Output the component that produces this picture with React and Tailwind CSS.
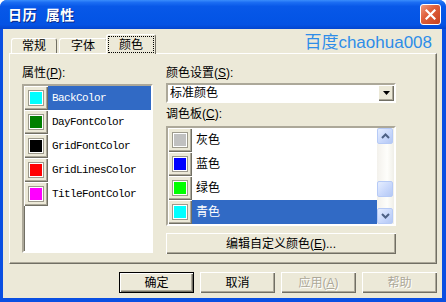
import React from "react";

const raised =
  "bg-[#ECE9D8] shadow-[inset_1px_1px_0_#ffffff,inset_-1px_-1px_0_#716F64,inset_-2px_-2px_0_#ACA899]";
const sunken =
  "border-t-2 border-l-2 border-b-2 border-r-2 border-t-[#ACA899] border-l-[#ACA899] border-b-white border-r-white";
const cjk = "font-['Liberation_Sans','Noto_Sans_CJK_SC',sans-serif]";

function ColorButton({ fill }) {
  return (
    <div className={`w-[24px] h-[24px] shrink-0 flex items-center justify-center ${raised}`}>
      <div className="w-[16px] h-[16px] border border-[#9D9A8C] bg-white p-[1px] -mt-px -ml-px">
        <div className={`w-full h-full ${fill}`} />
      </div>
    </div>
  );
}

function PropRow({ fill, name, selected }) {
  return (
    <div className="flex h-[24px] items-stretch">
      <ColorButton fill={fill} />
      <div
        className={`flex-1 flex items-center pl-[4px] font-['Liberation_Mono',monospace] text-[11px] tracking-[-0.6px] ${
          selected ? "bg-[#316AC5] text-white" : "text-black"
        }`}
      >
        {name}
      </div>
    </div>
  );
}

function PaletteRow({ fill, name, selected }) {
  return (
    <div className="flex h-[24px] items-stretch shrink-0">
      <ColorButton fill={fill} />
      <div
        className={`flex-1 flex items-center pl-[4px] text-[12px] leading-[14px] ${
          selected ? "bg-[#316AC5] text-white" : "text-black"
        }`}
      >
        {name}
      </div>
    </div>
  );
}

function ScrollBtn({ dir }) {
  return (
    <div className="w-[16px] h-[16px] rounded-[2px] border border-[#B6CAF6] bg-[linear-gradient(135deg,#E6EEFF_0%,#C6D6FB_60%,#B4C8F4_100%)] flex items-center justify-center">
      {dir && (
        <svg width="9" height="6" viewBox="0 0 9 6">
          {dir === "up" ? (
            <path d="M1 5 L4.5 1.5 L8 5" stroke="#4D6185" strokeWidth="2" fill="none" />
          ) : (
            <path d="M1 1 L4.5 4.5 L8 1" stroke="#4D6185" strokeWidth="2" fill="none" />
          )}
        </svg>
      )}
    </div>
  );
}

function DlgButton({ children, isDefault, disabled }) {
  return (
    <div
      className={`w-[75px] h-[21px] flex items-center justify-center text-[12px] leading-[14px] ${raised} ${
        isDefault ? "border border-black" : ""
      } ${disabled ? "text-[#ACA899] [text-shadow:1px_1px_0_#ffffff]" : "text-black"}`}
    >
      {children}
    </div>
  );
}

export default function App() {
  return (
    <div className={`w-[446px] h-[302px] flex flex-col bg-[#0A4FE2] rounded-t-[7px] overflow-hidden ${cjk}`}>
      {/* Title bar */}
      <div className="h-[29px] shrink-0 flex items-center justify-between pl-[8px] pr-[5px] bg-[linear-gradient(180deg,#3A8DFB_0%,#1C6EF3_8%,#0858E8_22%,#0455E6_60%,#0553E4_85%,#0445CF_100%)]">
        <span className="text-white font-bold text-[14px] leading-[16px] [text-shadow:1px_1px_0_#0A2A8A] tracking-[0.5px]">
          日历&nbsp;&nbsp;属性
        </span>
        <div className="w-[21px] h-[21px] rounded-[3px] border border-white bg-[linear-gradient(135deg,#F09A7E_0%,#E0603C_40%,#C8401E_100%)] flex items-center justify-center">
          <svg width="11" height="11" viewBox="0 0 11 11">
            <path d="M1.5 1.5 L9.5 9.5 M9.5 1.5 L1.5 9.5" stroke="#fff" strokeWidth="2.2" strokeLinecap="square" />
          </svg>
        </div>
      </div>

      {/* Body */}
      <div className="flex-1 ml-[3px] mr-[4px] mb-[4px] bg-[#ECE9D8] flex flex-col pl-[6px] pr-[5px] pt-[6px]">
        {/* Tabs */}
        <div className="h-[18px] flex items-end pl-[2px] relative z-10">
          <div className="w-[46px] h-[15px] border-t border-l border-white border-r border-r-[#716F64] rounded-t-[3px] flex items-center justify-center text-[12px] leading-[14px] text-black">
            常规
          </div>
          <div className="ml-[2px] w-[48px] h-[15px] border-t border-l border-white border-r border-r-[#716F64] rounded-t-[3px] flex items-center justify-center text-[12px] leading-[14px] text-black">
            字体
          </div>
          <div className="-ml-[1px] w-[50px] h-[20px] -mb-[1px] bg-[#ECE9D8] border-t border-l border-white border-r border-r-[#716F64] rounded-t-[3px] flex items-stretch p-[1px]">
            <div className="flex-1 border border-dotted border-black flex items-center justify-center text-[12px] leading-[14px] text-black">
              颜色
            </div>
          </div>
          <div className="ml-auto mr-[5px] self-start -mt-[2px] text-[17px] leading-[20px] text-[#2E8DE8]">
            百度chaohua008
          </div>
        </div>

        {/* Panel */}
        <div className="h-[211px] shrink-0 border-t border-l border-white border-r border-b border-r-[#716F64] border-b-[#716F64] shadow-[inset_-1px_-1px_0_#ACA899] flex pl-[12px] pt-[12px] gap-[13px]">
          {/* Left column */}
          <div className="w-[131px] flex flex-col">
            <div className="h-[14px] leading-[14px] text-[12px] text-black">
              属性(<span className="underline">P</span>):
            </div>
            <div className={`mt-[4px] h-[169px] bg-white ${sunken} shadow-[inset_1px_1px_0_#716F64]`}>
              <div className="flex flex-col">
                <PropRow fill="bg-[#00FFFF]" name="BackColor" selected />
                <PropRow fill="bg-[#008000]" name="DayFontColor" />
                <PropRow fill="bg-[#000000]" name="GridFontColor" />
                <PropRow fill="bg-[#FF0000]" name="GridLinesColor" />
                <PropRow fill="bg-[#FF00FF]" name="TitleFontColor" />
              </div>
            </div>
          </div>

          {/* Right column */}
          <div className="w-[230px] flex flex-col">
            <div className="h-[14px] leading-[14px] text-[12px] text-black">
              颜色设置(<span className="underline">S</span>):
            </div>
            <div className={`mt-[3px] h-[20px] bg-white ${sunken} flex items-center`}>
              <span className="flex-1 pl-[2px] text-[12px] leading-[14px] text-black">标准颜色</span>
              <div className={`w-[16px] h-[16px] ${raised} flex items-center justify-center`}>
                <svg width="7" height="4" viewBox="0 0 7 4">
                  <path d="M0 0 H7 L3.5 4 Z" fill="#000" />
                </svg>
              </div>
            </div>
            <div className="mt-[4px] h-[14px] leading-[14px] text-[12px] text-black">
              调色板(<span className="underline">C</span>):
            </div>
            <div className={`mt-[5px] h-[100px] bg-white ${sunken} flex overflow-hidden`}>
              <div className="flex-1 flex flex-col overflow-hidden">
                <PaletteRow fill="bg-[#C0C0C0]" name="灰色" />
                <PaletteRow fill="bg-[#0000FF]" name="蓝色" />
                <PaletteRow fill="bg-[#00FF00]" name="绿色" />
                <PaletteRow fill="bg-[#00FFFF]" name="青色" selected />
                <PaletteRow fill="bg-[#FFFF00]" name="" />
              </div>
              <div className="w-[17px] flex flex-col bg-[linear-gradient(90deg,#F3F1EC_0%,#FEFEFB_60%,#F0EFE8_100%)]">
                <ScrollBtn dir="up" />
                <div className="mt-[37px]">
                  <ScrollBtn />
                </div>
                <div className="mt-auto">
                  <ScrollBtn dir="down" />
                </div>
              </div>
            </div>
            <div className={`mt-[7px] h-[21px] ${raised} flex items-center justify-center text-[12px] leading-[14px] text-black`}>
              编辑自定义颜色(<span className="underline">E</span>)...
            </div>
          </div>
        </div>

        {/* Buttons */}
        <div className="mt-[8px] flex justify-end gap-[6px]">
          <DlgButton isDefault>确定</DlgButton>
          <DlgButton>取消</DlgButton>
          <DlgButton disabled>
            应用(<span className="underline">A</span>)
          </DlgButton>
          <DlgButton disabled>帮助</DlgButton>
        </div>
      </div>
    </div>
  );
}
